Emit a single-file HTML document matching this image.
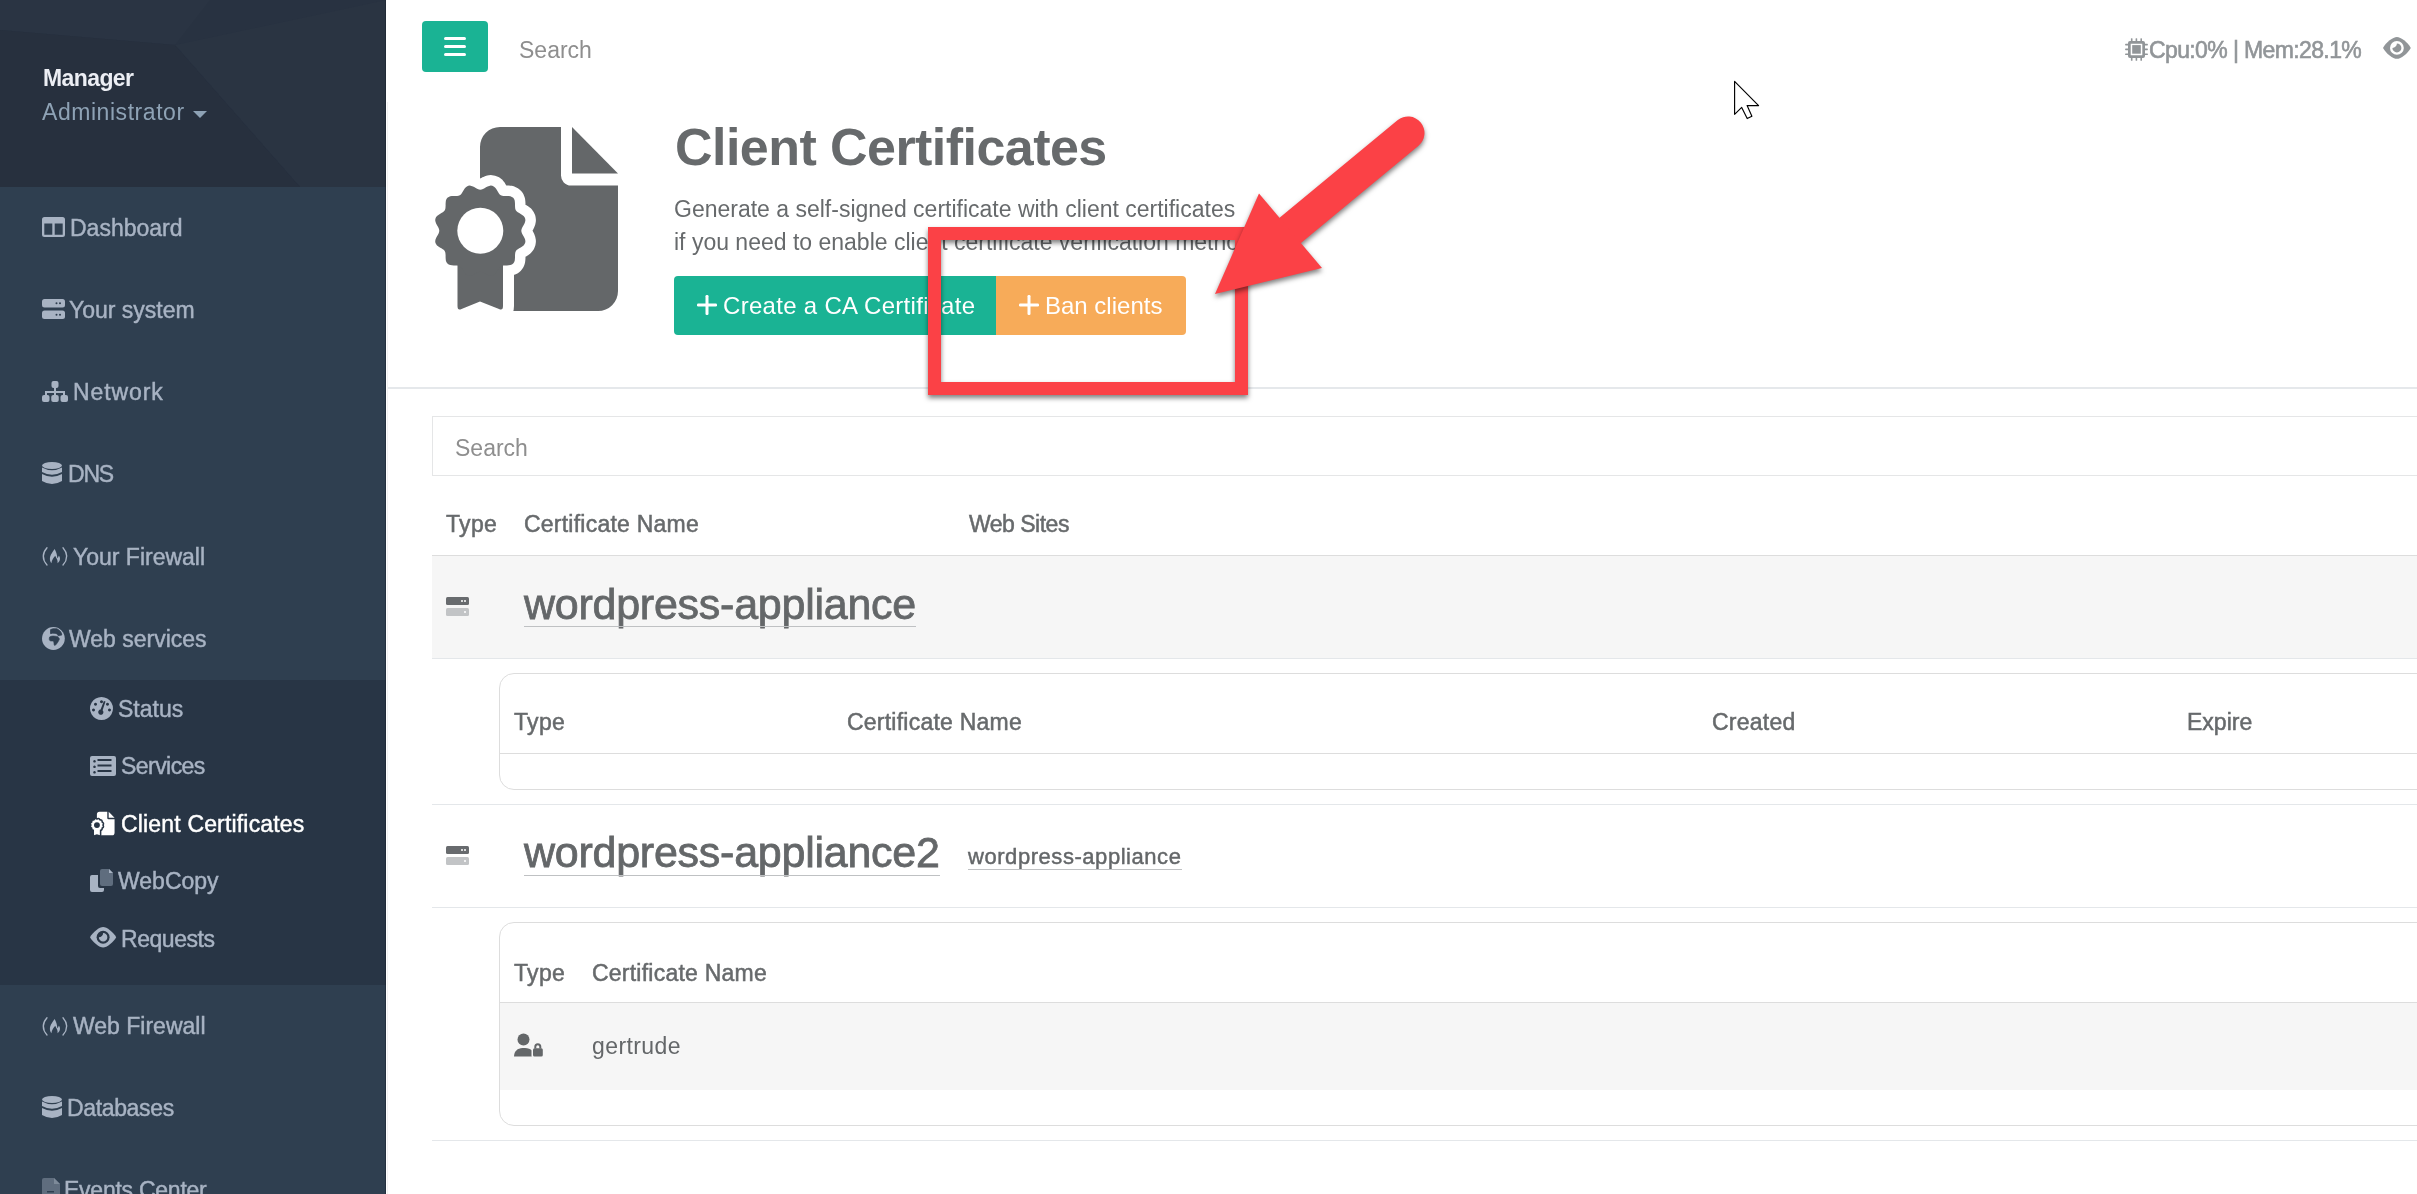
<!DOCTYPE html>
<html><head><meta charset="utf-8"><title>Client Certificates</title>
<style>
html,body{margin:0;padding:0;width:2417px;height:1194px;overflow:hidden;background:#fff;position:relative;font-family:"Liberation Sans", sans-serif}
.t{position:absolute;white-space:nowrap;font-family:"Liberation Sans", sans-serif;will-change:transform}
.ic{position:absolute;overflow:visible}
.hl{position:absolute}
#side{position:absolute;left:0;top:0;width:386px;height:1194px;background:#2f3f50}
#sidehead{position:absolute;left:0;top:0;width:386px;height:187px;background:#283241;overflow:hidden}
#submenu{position:absolute;left:0;top:680px;width:386px;height:305px;background:#283545}
#sideedge{position:absolute;left:385px;top:0;width:1px;height:1194px;background:rgba(20,28,38,0.4)}
#sideedge:after{content:"";position:absolute;left:2px;top:102px;width:1px;height:1092px;background:#f1f1f2}
#burger{position:absolute;left:422px;top:21px;width:66px;height:51px;background:#1ab394;border-radius:4px}
#burger i{position:absolute;left:22px;width:22px;height:3px;border-radius:2px;background:#fff}
#btn1{position:absolute;left:674px;top:276px;width:322px;height:58.5px;background:#1ab394;border-radius:4px 0 0 4px}
#btn2{position:absolute;left:996px;top:276px;width:190px;height:58.5px;background:#f7ab59;border-radius:0 4px 4px 0}
#search2{position:absolute;left:432px;top:416px;width:2100px;height:58px;border:1px solid #e5e6e7;background:#fff}
.nest{position:absolute;left:499px;width:2000px;border:1px solid #dddddd;border-radius:15px;box-sizing:border-box}
#redbox{position:absolute;left:928px;top:227px;width:320px;height:168px;box-sizing:border-box;border:13px solid #fb4146;
  filter:drop-shadow(0px 3px 2.5px rgba(0,0,0,0.5))}
</style></head><body>
<div id="side"></div><div id="sidehead"><svg width="386" height="187" style="position:absolute;left:0;top:0"><polygon points="0,0 210,0 175,45 0,30" fill="#2b3544" opacity="0.6"/><polygon points="175,45 386,0 386,187 300,187" fill="#2b3544" opacity="0.5"/><polygon points="0,30 175,45 300,187 0,187" fill="#252e3b" opacity="0.5"/></svg></div><div id="submenu"></div><div id="sideedge"></div><div class="t" style="left:43px;top:66.8px;font-size:23px;line-height:23px;color:#eceef4;font-weight:700;letter-spacing:-0.6px;">Manager</div>
<div class="t" style="left:42px;top:101.3px;font-size:23px;line-height:23px;color:#8ea2b5;font-weight:400;letter-spacing:0.55px;">Administrator</div>
<svg class="ic" style="left:193px;top:111px" width="14" height="7"><polygon points="0,0 14,0 7,7" fill="#8ea2b5"/></svg><svg class="ic" style="left:42px;top:217px" width="23" height="20" viewBox="0 0 23 20" fill="#a8b3c3"><path fill-rule="evenodd" d="M2.5,0 H20.5 A2.5,2.5 0 0 1 23,2.5 V17.5 A2.5,2.5 0 0 1 20.5,20 H2.5 A2.5,2.5 0 0 1 0,17.5 V2.5 A2.5,2.5 0 0 1 2.5,0Z M2.3,6.5 V17.7 H10.3 V6.5Z M12.7,6.5 V17.7 H20.7 V6.5Z"/></svg>
<div class="t" style="left:70px;top:217.3px;font-size:23px;line-height:23px;color:#a8b3c3;font-weight:400;letter-spacing:0px;-webkit-text-stroke:0.45px #a8b3c3;">Dashboard</div>
<svg class="ic" style="left:42px;top:299px" width="23" height="20" viewBox="0 0 23 20" fill="#a8b3c3"><rect x="0" y="0" width="23" height="8.5" rx="2.5"/><rect x="0" y="11.5" width="23" height="8.5" rx="2.5"/><circle cx="14.5" cy="4.25" r="1" fill="#2e3e4f"/><circle cx="18" cy="4.25" r="1" fill="#2e3e4f"/><circle cx="14.5" cy="15.75" r="1" fill="#2e3e4f"/><circle cx="18" cy="15.75" r="1" fill="#2e3e4f"/></svg>
<div class="t" style="left:69px;top:299.3px;font-size:23px;line-height:23px;color:#a8b3c3;font-weight:400;letter-spacing:0px;-webkit-text-stroke:0.45px #a8b3c3;">Your system</div>
<svg class="ic" style="left:42px;top:381px" width="26" height="21" viewBox="0 0 26 21" fill="#a8b3c3"><rect x="9.5" y="0" width="7" height="7" rx="2"/><rect x="12" y="6" width="2" height="5"/><rect x="3" y="10" width="20" height="2"/><rect x="3" y="10" width="2" height="5"/><rect x="21" y="10" width="2" height="5"/><rect x="12" y="10" width="2" height="5"/><rect x="0" y="14" width="7.5" height="7" rx="2"/><rect x="9.25" y="14" width="7.5" height="7" rx="2"/><rect x="18.5" y="14" width="7.5" height="7" rx="2"/></svg>
<div class="t" style="left:73px;top:381.3px;font-size:23px;line-height:23px;color:#a8b3c3;font-weight:400;letter-spacing:0.9px;-webkit-text-stroke:0.45px #a8b3c3;">Network</div>
<svg class="ic" style="left:42px;top:462px" width="20" height="23" viewBox="0 0 20 23" fill="#a8b3c3"><ellipse cx="10" cy="3.5" rx="10" ry="3.5"/><path d="M0,5.5 Q10,11 20,5.5 V10 Q10,15.5 0,10Z"/><path d="M0,12 Q10,17.5 20,12 V19 Q10,25 0,19Z"/></svg>
<div class="t" style="left:67.5px;top:463.3px;font-size:23px;line-height:23px;color:#a8b3c3;font-weight:400;letter-spacing:-1.2px;-webkit-text-stroke:0.45px #a8b3c3;">DNS</div>
<svg class="ic" style="left:38px;top:540px" width="34" height="32" viewBox="0 0 34 32" fill="#a8b3c3"><path d="M9.00,7.80 Q1.50,16.40 9.00,25.00" stroke="#a8b3c3" stroke-width="1.3" fill="none" stroke-linecap="round"/><path d="M25.00,7.80 Q32.50,16.40 25.00,25.00" stroke="#a8b3c3" stroke-width="1.3" fill="none" stroke-linecap="round"/><path d="M16.60,9.00 C15.00,11.50 12.00,15.00 11.90,18.50 C11.80,20.50 12.50,22.00 13.40,23.20 C13.80,20.00 15.50,17.50 17.30,15.80 C17.80,17.50 18.80,18.50 19.30,20.00 C19.60,21.20 19.60,22.30 19.50,23.30 C21.00,22.00 22.00,20.50 22.00,18.70 C22.00,17.50 21.50,16.50 20.80,15.80 C20.50,17.00 20.00,17.80 19.30,18.20 C19.30,15.00 18.00,11.50 16.60,9.00Z"/></svg>
<div class="t" style="left:73px;top:546.3px;font-size:23px;line-height:23px;color:#a8b3c3;font-weight:400;letter-spacing:0px;-webkit-text-stroke:0.45px #a8b3c3;">Your Firewall</div>
<svg class="ic" style="left:38px;top:622px" width="32" height="32" viewBox="0 0 32 32" fill="#a8b3c3"><circle cx="15.40" cy="16.50" r="11.4"/><path d="M12.60,7.60 L15.00,6.80 L19.00,6.80 L21.50,8.50 L22.50,9.50 L23.30,11.00 L23.80,13.00 L22.50,13.30 L21.30,13.60 L20.30,13.80 L19.50,12.40 L18.00,11.40 L16.00,11.20 L14.50,11.20 L13.00,11.60 L12.50,11.60Z" fill="#2f3f50" stroke="#2f3f50" stroke-width="0.8" stroke-linejoin="round"/><path d="M11.60,15.00 L13.00,14.30 L15.00,14.00 L17.50,14.20 L18.50,14.40 L19.50,14.50 L20.20,15.30 L21.20,16.30 L21.30,17.50 L20.60,18.80 L19.80,20.20 L18.50,22.00 L17.00,23.60 L16.20,23.00 L16.00,21.50 L15.80,20.00 L15.50,19.20 L14.50,19.00 L13.50,19.00 L12.00,18.80 L11.30,17.50 L11.30,16.20Z" fill="#2f3f50" stroke="#2f3f50" stroke-width="0.6" stroke-linejoin="round"/></svg>
<div class="t" style="left:69px;top:628.3px;font-size:23px;line-height:23px;color:#a8b3c3;font-weight:400;letter-spacing:0px;-webkit-text-stroke:0.45px #a8b3c3;">Web services</div>
<svg class="ic" style="left:90px;top:697px" width="23" height="23" viewBox="0 0 23 23" fill="#a8b3c3"><path fill-rule="evenodd" d="M11.5,0 A11.5,11.5 0 1 1 11.49,0Z M11.5,3.2 A1.5,1.5 0 1 0 11.51,3.2Z M5.5,5.8 A1.5,1.5 0 1 0 5.51,5.8Z M3.5,11.5 A1.5,1.5 0 1 0 3.51,11.5Z M19.5,11.5 A1.5,1.5 0 1 0 19.51,11.5Z M17.5,5.8 A1.5,1.5 0 1 0 17.51,5.8Z M15.5,4.5 L12.6,13.3 A2.6,2.6 0 1 1 10.6,12.6 L13.9,4 Z"/></svg>
<div class="t" style="left:118px;top:698.3px;font-size:23px;line-height:23px;color:#a8b3c3;font-weight:400;letter-spacing:0px;-webkit-text-stroke:0.45px #a8b3c3;">Status</div>
<svg class="ic" style="left:90px;top:756px" width="26" height="20" viewBox="0 0 26 20" fill="#a8b3c3"><path fill-rule="evenodd" d="M2,0 H24 A2,2 0 0 1 26,2 V18 A2,2 0 0 1 24,20 H2 A2,2 0 0 1 0,18 V2 A2,2 0 0 1 2,0Z M4.5,4 A1.3,1.3 0 1 0 4.51,4Z M4.5,9.5 A1.3,1.3 0 1 0 4.51,9.5Z M4.5,15 A1.3,1.3 0 1 0 4.51,15Z M7.5,3 V5 H21.5 V3Z M7.5,8.5 V10.5 H21.5 V8.5Z M7.5,14 V16 H21.5 V14Z"/></svg>
<div class="t" style="left:120.5px;top:755.3px;font-size:23px;line-height:23px;color:#a8b3c3;font-weight:400;letter-spacing:-0.55px;-webkit-text-stroke:0.45px #a8b3c3;">Services</div>
<div class="t" style="left:120.5px;top:812.8px;font-size:23px;line-height:23px;color:#ffffff;font-weight:400;letter-spacing:0.17px;-webkit-text-stroke:0.45px #ffffff;">Client Certificates</div>
<svg class="ic" style="left:90px;top:869px" width="23" height="23" viewBox="0 0 23 23" fill="#a8b3c3"><path d="M2,6 H8 V17 A2,2 0 0 0 10,19 H14 V21 A2,2 0 0 1 12,23 H2 A2,2 0 0 1 0,21 V8 A2,2 0 0 1 2,6Z"/><path d="M12,0 H19 L23,4 V15 A2,2 0 0 1 21,17 H12 A2,2 0 0 1 10,15 V2 A2,2 0 0 1 12,0Z" fill="#5f6d7e"/><path d="M19,0 L23,4 H19Z" fill="#a8b3c3"/></svg>
<div class="t" style="left:118px;top:870.3px;font-size:23px;line-height:23px;color:#a8b3c3;font-weight:400;letter-spacing:0px;-webkit-text-stroke:0.45px #a8b3c3;">WebCopy</div>
<svg class="ic" style="left:89.8px;top:927.2px" width="27" height="21" viewBox="0 0 27 21" fill="#a8b3c3"><path d="M0,10.25 C2.88,4.92 9.43,0 13.1,0 C16.77,0 23.32,4.92 26.2,10.25 C23.32,15.58 16.77,20.5 13.1,20.5 C9.43,20.5 2.88,15.58 0,10.25Z" fill="#a8b3c3"/><circle cx="13.1" cy="10.25" r="6.50" fill="#283545"/><path d="M13.1,6.01 A4.24,4.24 0 1 1 8.86,10.25 A4.24,4.24 0 0 0 13.1,6.01Z" fill="#a8b3c3"/></svg>
<div class="t" style="left:120.5px;top:928.3px;font-size:23px;line-height:23px;color:#a8b3c3;font-weight:400;letter-spacing:-0.45px;-webkit-text-stroke:0.45px #a8b3c3;">Requests</div>
<svg class="ic" style="left:38px;top:1009.5px" width="34" height="32" viewBox="0 0 34 32" fill="#a8b3c3"><path d="M9.00,7.80 Q1.50,16.40 9.00,25.00" stroke="#a8b3c3" stroke-width="1.3" fill="none" stroke-linecap="round"/><path d="M25.00,7.80 Q32.50,16.40 25.00,25.00" stroke="#a8b3c3" stroke-width="1.3" fill="none" stroke-linecap="round"/><path d="M16.60,9.00 C15.00,11.50 12.00,15.00 11.90,18.50 C11.80,20.50 12.50,22.00 13.40,23.20 C13.80,20.00 15.50,17.50 17.30,15.80 C17.80,17.50 18.80,18.50 19.30,20.00 C19.60,21.20 19.60,22.30 19.50,23.30 C21.00,22.00 22.00,20.50 22.00,18.70 C22.00,17.50 21.50,16.50 20.80,15.80 C20.50,17.00 20.00,17.80 19.30,18.20 C19.30,15.00 18.00,11.50 16.60,9.00Z"/></svg>
<div class="t" style="left:73px;top:1015.3px;font-size:23px;line-height:23px;color:#a8b3c3;font-weight:400;letter-spacing:0px;-webkit-text-stroke:0.45px #a8b3c3;">Web Firewall</div>
<svg class="ic" style="left:42px;top:1096px" width="20" height="23" viewBox="0 0 20 23" fill="#a8b3c3"><ellipse cx="10" cy="3.5" rx="10" ry="3.5"/><path d="M0,5.5 Q10,11 20,5.5 V10 Q10,15.5 0,10Z"/><path d="M0,12 Q10,17.5 20,12 V19 Q10,25 0,19Z"/></svg>
<div class="t" style="left:66.5px;top:1097.3px;font-size:23px;line-height:23px;color:#a8b3c3;font-weight:400;letter-spacing:-0.35px;-webkit-text-stroke:0.45px #a8b3c3;">Databases</div>
<svg class="ic" style="left:42px;top:1178px" width="18" height="25" viewBox="0 0 18 25" fill="#5f6d7e"><path d="M2,0 H12 L18,6 V25 H0 V2 A2,2 0 0 1 2,0Z"/><path d="M12,0 L18,6 H12Z" fill="#7d8a99"/><rect x="5" y="13" width="7" height="1.5" fill="#2e3e4f"/></svg>
<div class="t" style="left:64px;top:1179.3px;font-size:23px;line-height:23px;color:#a8b3c3;font-weight:400;letter-spacing:-0.25px;-webkit-text-stroke:0.45px #a8b3c3;">Events Center</div>
<div id="burger"><i style="top:16px"></i><i style="top:24px"></i><i style="top:31.5px"></i></div><div class="t" style="left:519px;top:39.3px;font-size:23px;line-height:23px;color:#8e8e8e;font-weight:400;letter-spacing:0px;">Search</div>
<svg class="ic" style="left:2120px;top:32px" width="32" height="32" viewBox="0 0 32 32" fill="#919598"><path fill-rule="evenodd" d="M10,9 H23 A2,2 0 0 1 25,11 V24 A2,2 0 0 1 23,26 H10 A2,2 0 0 1 8,24 V11 A2,2 0 0 1 10,9Z M10.7,11.7 V23.3 H22.3 V11.7Z"/><rect x="12.2" y="13.1" width="8.6" height="8.6"/><rect x="10.9" y="6.2" width="1.6" height="3.5" rx="0.6"/><rect x="10.9" y="25.3" width="1.6" height="3.5" rx="0.6"/><rect x="15.6" y="6.2" width="1.6" height="3.5" rx="0.6"/><rect x="15.6" y="25.3" width="1.6" height="3.5" rx="0.6"/><rect x="20.4" y="6.2" width="1.6" height="3.5" rx="0.6"/><rect x="20.4" y="25.3" width="1.6" height="3.5" rx="0.6"/><rect x="5.1" y="11.8" width="3.5" height="1.6" rx="0.6"/><rect x="24.4" y="11.8" width="3.5" height="1.6" rx="0.6"/><rect x="5.1" y="16.6" width="3.5" height="1.6" rx="0.6"/><rect x="24.4" y="16.6" width="3.5" height="1.6" rx="0.6"/><rect x="5.1" y="21.5" width="3.5" height="1.6" rx="0.6"/><rect x="24.4" y="21.5" width="3.5" height="1.6" rx="0.6"/></svg>
<div class="t" style="left:2149px;top:39.3px;font-size:23px;line-height:23px;color:#919598;font-weight:400;letter-spacing:-0.62px;-webkit-text-stroke:0.6px #919598;">Cpu:0% | Mem:28.1%</div>
<svg class="ic" style="left:2383px;top:37.2px" width="28" height="22" viewBox="0 0 28 22" fill="#a8b3c3"><path d="M0,10.9 C3.06,5.23 10.01,0 13.9,0 C17.79,0 24.74,5.23 27.8,10.9 C24.74,16.57 17.79,21.8 13.9,21.8 C10.01,21.8 3.06,16.57 0,10.9Z" fill="#919598"/><circle cx="13.9" cy="10.9" r="6.89" fill="#ffffff"/><path d="M13.9,6.40 A4.50,4.50 0 1 1 9.40,10.9 A4.50,4.50 0 0 0 13.9,6.40Z" fill="#919598"/></svg>
<svg class="ic" style="left:430px;top:120px;color:#646769;--bg:#fff" width="200" height="200"><path d="M70.0,7.0 H131 V55 A10,10 0 0 0 141.0,65.5 H188 V171 A20,20 0 0 1 168.0,191.0 H50 V27 A20,20 0 0 1 70.0,7.0Z" fill="currentColor"/><path d="M142.0,7.0 L188.0,53.5 H142Z" fill="currentColor"/><path d="M91.3,110.7 L91.5,112.0 L92.0,113.4 L92.8,114.9 L93.7,116.4 L94.5,118.0 L95.1,119.6 L95.4,121.2 L95.2,122.7 L94.6,124.1 L93.6,125.4 L92.2,126.5 L90.7,127.4 L89.2,128.3 L87.8,129.2 L86.6,130.1 L85.8,131.2 L85.3,132.5 L85.1,133.9 L85.0,135.6 L85.0,137.3 L84.9,139.1 L84.7,140.8 L84.1,142.3 L83.2,143.6 L81.9,144.5 L80.4,145.1 L78.7,145.3 L76.9,145.4 L75.2,145.4 L73.5,145.5 L72.1,145.7 L70.8,146.2 L69.7,147.0 L68.8,148.2 L67.9,149.6 L67.0,151.1 L66.1,152.6 L65.0,154.0 L63.7,155.0 L62.3,155.6 L60.8,155.8 L59.2,155.5 L57.6,154.9 L56.0,154.1 L54.5,153.2 L53.0,152.4 L51.6,151.9 L50.3,151.7 L49.0,151.9 L47.6,152.4 L46.1,153.2 L44.6,154.1 L43.0,154.9 L41.4,155.5 L39.8,155.8 L38.3,155.6 L36.9,155.0 L35.6,154.0 L34.5,152.6 L33.6,151.1 L32.7,149.6 L31.8,148.2 L30.9,147.0 L29.8,146.2 L28.5,145.7 L27.1,145.5 L25.4,145.4 L23.7,145.4 L21.9,145.3 L20.2,145.1 L18.7,144.5 L17.4,143.6 L16.5,142.3 L15.9,140.8 L15.7,139.1 L15.6,137.3 L15.6,135.6 L15.5,133.9 L15.3,132.5 L14.8,131.2 L14.0,130.1 L12.8,129.2 L11.4,128.3 L9.9,127.4 L8.4,126.5 L7.0,125.4 L6.0,124.1 L5.4,122.7 L5.2,121.2 L5.5,119.6 L6.1,118.0 L6.9,116.4 L7.8,114.9 L8.6,113.4 L9.1,112.0 L9.3,110.7 L9.1,109.4 L8.6,108.0 L7.8,106.5 L6.9,105.0 L6.1,103.4 L5.5,101.8 L5.2,100.2 L5.4,98.7 L6.0,97.3 L7.0,96.0 L8.4,94.9 L9.9,94.0 L11.4,93.1 L12.8,92.2 L14.0,91.3 L14.8,90.2 L15.3,88.9 L15.5,87.5 L15.6,85.8 L15.6,84.1 L15.7,82.3 L15.9,80.6 L16.5,79.1 L17.4,77.8 L18.7,76.9 L20.2,76.3 L21.9,76.1 L23.7,76.0 L25.4,76.0 L27.1,75.9 L28.5,75.7 L29.8,75.2 L30.9,74.4 L31.8,73.2 L32.7,71.8 L33.6,70.3 L34.5,68.8 L35.6,67.4 L36.9,66.4 L38.3,65.8 L39.8,65.6 L41.4,65.9 L43.0,66.5 L44.6,67.3 L46.1,68.2 L47.6,69.0 L49.0,69.5 L50.3,69.7 L51.6,69.5 L53.0,69.0 L54.5,68.2 L56.0,67.3 L57.6,66.5 L59.2,65.9 L60.8,65.6 L62.3,65.8 L63.7,66.4 L65.0,67.4 L66.1,68.8 L67.0,70.3 L67.9,71.8 L68.8,73.2 L69.7,74.4 L70.8,75.2 L72.1,75.7 L73.5,75.9 L75.2,76.0 L76.9,76.0 L78.7,76.1 L80.4,76.3 L81.9,76.9 L83.2,77.8 L84.1,79.1 L84.7,80.6 L84.9,82.3 L85.0,84.1 L85.0,85.8 L85.1,87.5 L85.3,88.9 L85.8,90.2 L86.6,91.3 L87.8,92.2 L89.2,93.1 L90.7,94.0 L92.2,94.9 L93.6,96.0 L94.6,97.3 L95.2,98.7 L95.4,100.2 L95.1,101.8 L94.5,103.4 L93.7,105.0 L92.8,106.5 L92.0,108.0 L91.5,109.4Z" fill="var(--bg)" stroke="var(--bg)" stroke-width="21" stroke-linejoin="round"/><path d="M27.5,142.0 H73 V186 Q73.0,191.0 69.0,189.0 L50.0,181.5 L31.5,189.0 Q27.5,191.0 27.5,186.0Z" fill="var(--bg)" stroke="var(--bg)" stroke-width="22" stroke-linejoin="round"/><path d="M27.5,142.0 H73 V186 Q73.0,191.0 69.0,189.0 L50.0,181.5 L31.5,189.0 Q27.5,191.0 27.5,186.0Z" fill="currentColor"/><path d="M91.3,110.7 L91.5,112.0 L92.0,113.4 L92.8,114.9 L93.7,116.4 L94.5,118.0 L95.1,119.6 L95.4,121.2 L95.2,122.7 L94.6,124.1 L93.6,125.4 L92.2,126.5 L90.7,127.4 L89.2,128.3 L87.8,129.2 L86.6,130.1 L85.8,131.2 L85.3,132.5 L85.1,133.9 L85.0,135.6 L85.0,137.3 L84.9,139.1 L84.7,140.8 L84.1,142.3 L83.2,143.6 L81.9,144.5 L80.4,145.1 L78.7,145.3 L76.9,145.4 L75.2,145.4 L73.5,145.5 L72.1,145.7 L70.8,146.2 L69.7,147.0 L68.8,148.2 L67.9,149.6 L67.0,151.1 L66.1,152.6 L65.0,154.0 L63.7,155.0 L62.3,155.6 L60.8,155.8 L59.2,155.5 L57.6,154.9 L56.0,154.1 L54.5,153.2 L53.0,152.4 L51.6,151.9 L50.3,151.7 L49.0,151.9 L47.6,152.4 L46.1,153.2 L44.6,154.1 L43.0,154.9 L41.4,155.5 L39.8,155.8 L38.3,155.6 L36.9,155.0 L35.6,154.0 L34.5,152.6 L33.6,151.1 L32.7,149.6 L31.8,148.2 L30.9,147.0 L29.8,146.2 L28.5,145.7 L27.1,145.5 L25.4,145.4 L23.7,145.4 L21.9,145.3 L20.2,145.1 L18.7,144.5 L17.4,143.6 L16.5,142.3 L15.9,140.8 L15.7,139.1 L15.6,137.3 L15.6,135.6 L15.5,133.9 L15.3,132.5 L14.8,131.2 L14.0,130.1 L12.8,129.2 L11.4,128.3 L9.9,127.4 L8.4,126.5 L7.0,125.4 L6.0,124.1 L5.4,122.7 L5.2,121.2 L5.5,119.6 L6.1,118.0 L6.9,116.4 L7.8,114.9 L8.6,113.4 L9.1,112.0 L9.3,110.7 L9.1,109.4 L8.6,108.0 L7.8,106.5 L6.9,105.0 L6.1,103.4 L5.5,101.8 L5.2,100.2 L5.4,98.7 L6.0,97.3 L7.0,96.0 L8.4,94.9 L9.9,94.0 L11.4,93.1 L12.8,92.2 L14.0,91.3 L14.8,90.2 L15.3,88.9 L15.5,87.5 L15.6,85.8 L15.6,84.1 L15.7,82.3 L15.9,80.6 L16.5,79.1 L17.4,77.8 L18.7,76.9 L20.2,76.3 L21.9,76.1 L23.7,76.0 L25.4,76.0 L27.1,75.9 L28.5,75.7 L29.8,75.2 L30.9,74.4 L31.8,73.2 L32.7,71.8 L33.6,70.3 L34.5,68.8 L35.6,67.4 L36.9,66.4 L38.3,65.8 L39.8,65.6 L41.4,65.9 L43.0,66.5 L44.6,67.3 L46.1,68.2 L47.6,69.0 L49.0,69.5 L50.3,69.7 L51.6,69.5 L53.0,69.0 L54.5,68.2 L56.0,67.3 L57.6,66.5 L59.2,65.9 L60.8,65.6 L62.3,65.8 L63.7,66.4 L65.0,67.4 L66.1,68.8 L67.0,70.3 L67.9,71.8 L68.8,73.2 L69.7,74.4 L70.8,75.2 L72.1,75.7 L73.5,75.9 L75.2,76.0 L76.9,76.0 L78.7,76.1 L80.4,76.3 L81.9,76.9 L83.2,77.8 L84.1,79.1 L84.7,80.6 L84.9,82.3 L85.0,84.1 L85.0,85.8 L85.1,87.5 L85.3,88.9 L85.8,90.2 L86.6,91.3 L87.8,92.2 L89.2,93.1 L90.7,94.0 L92.2,94.9 L93.6,96.0 L94.6,97.3 L95.2,98.7 L95.4,100.2 L95.1,101.8 L94.5,103.4 L93.7,105.0 L92.8,106.5 L92.0,108.0 L91.5,109.4Z" fill="currentColor"/><circle cx="50.30000000000001" cy="110.69999999999999" r="23" fill="var(--bg)"/></svg><svg class="ic" style="left:0px;top:0px;color:#ffffff;--bg:#283545" width="200" height="900"><g transform="translate(90.50,810.90) scale(0.128)"><path d="M70.0,7.0 H131 V55 A10,10 0 0 0 141.0,65.5 H188 V171 A20,20 0 0 1 168.0,191.0 H50 V27 A20,20 0 0 1 70.0,7.0Z" fill="currentColor"/><path d="M142.0,7.0 L188.0,53.5 H142Z" fill="currentColor"/><path d="M91.3,110.7 L91.5,112.0 L92.0,113.4 L92.8,114.9 L93.7,116.4 L94.5,118.0 L95.1,119.6 L95.4,121.2 L95.2,122.7 L94.6,124.1 L93.6,125.4 L92.2,126.5 L90.7,127.4 L89.2,128.3 L87.8,129.2 L86.6,130.1 L85.8,131.2 L85.3,132.5 L85.1,133.9 L85.0,135.6 L85.0,137.3 L84.9,139.1 L84.7,140.8 L84.1,142.3 L83.2,143.6 L81.9,144.5 L80.4,145.1 L78.7,145.3 L76.9,145.4 L75.2,145.4 L73.5,145.5 L72.1,145.7 L70.8,146.2 L69.7,147.0 L68.8,148.2 L67.9,149.6 L67.0,151.1 L66.1,152.6 L65.0,154.0 L63.7,155.0 L62.3,155.6 L60.8,155.8 L59.2,155.5 L57.6,154.9 L56.0,154.1 L54.5,153.2 L53.0,152.4 L51.6,151.9 L50.3,151.7 L49.0,151.9 L47.6,152.4 L46.1,153.2 L44.6,154.1 L43.0,154.9 L41.4,155.5 L39.8,155.8 L38.3,155.6 L36.9,155.0 L35.6,154.0 L34.5,152.6 L33.6,151.1 L32.7,149.6 L31.8,148.2 L30.9,147.0 L29.8,146.2 L28.5,145.7 L27.1,145.5 L25.4,145.4 L23.7,145.4 L21.9,145.3 L20.2,145.1 L18.7,144.5 L17.4,143.6 L16.5,142.3 L15.9,140.8 L15.7,139.1 L15.6,137.3 L15.6,135.6 L15.5,133.9 L15.3,132.5 L14.8,131.2 L14.0,130.1 L12.8,129.2 L11.4,128.3 L9.9,127.4 L8.4,126.5 L7.0,125.4 L6.0,124.1 L5.4,122.7 L5.2,121.2 L5.5,119.6 L6.1,118.0 L6.9,116.4 L7.8,114.9 L8.6,113.4 L9.1,112.0 L9.3,110.7 L9.1,109.4 L8.6,108.0 L7.8,106.5 L6.9,105.0 L6.1,103.4 L5.5,101.8 L5.2,100.2 L5.4,98.7 L6.0,97.3 L7.0,96.0 L8.4,94.9 L9.9,94.0 L11.4,93.1 L12.8,92.2 L14.0,91.3 L14.8,90.2 L15.3,88.9 L15.5,87.5 L15.6,85.8 L15.6,84.1 L15.7,82.3 L15.9,80.6 L16.5,79.1 L17.4,77.8 L18.7,76.9 L20.2,76.3 L21.9,76.1 L23.7,76.0 L25.4,76.0 L27.1,75.9 L28.5,75.7 L29.8,75.2 L30.9,74.4 L31.8,73.2 L32.7,71.8 L33.6,70.3 L34.5,68.8 L35.6,67.4 L36.9,66.4 L38.3,65.8 L39.8,65.6 L41.4,65.9 L43.0,66.5 L44.6,67.3 L46.1,68.2 L47.6,69.0 L49.0,69.5 L50.3,69.7 L51.6,69.5 L53.0,69.0 L54.5,68.2 L56.0,67.3 L57.6,66.5 L59.2,65.9 L60.8,65.6 L62.3,65.8 L63.7,66.4 L65.0,67.4 L66.1,68.8 L67.0,70.3 L67.9,71.8 L68.8,73.2 L69.7,74.4 L70.8,75.2 L72.1,75.7 L73.5,75.9 L75.2,76.0 L76.9,76.0 L78.7,76.1 L80.4,76.3 L81.9,76.9 L83.2,77.8 L84.1,79.1 L84.7,80.6 L84.9,82.3 L85.0,84.1 L85.0,85.8 L85.1,87.5 L85.3,88.9 L85.8,90.2 L86.6,91.3 L87.8,92.2 L89.2,93.1 L90.7,94.0 L92.2,94.9 L93.6,96.0 L94.6,97.3 L95.2,98.7 L95.4,100.2 L95.1,101.8 L94.5,103.4 L93.7,105.0 L92.8,106.5 L92.0,108.0 L91.5,109.4Z" fill="var(--bg)" stroke="var(--bg)" stroke-width="24" stroke-linejoin="round"/><path d="M27.5,142.0 H73 V186 Q73.0,191.0 69.0,189.0 L50.0,181.5 L31.5,189.0 Q27.5,191.0 27.5,186.0Z" fill="var(--bg)" stroke="var(--bg)" stroke-width="24" stroke-linejoin="round"/><path d="M27.5,142.0 H73 V186 Q73.0,191.0 69.0,189.0 L50.0,181.5 L31.5,189.0 Q27.5,191.0 27.5,186.0Z" fill="currentColor"/><path d="M91.3,110.7 L91.5,112.0 L92.0,113.4 L92.8,114.9 L93.7,116.4 L94.5,118.0 L95.1,119.6 L95.4,121.2 L95.2,122.7 L94.6,124.1 L93.6,125.4 L92.2,126.5 L90.7,127.4 L89.2,128.3 L87.8,129.2 L86.6,130.1 L85.8,131.2 L85.3,132.5 L85.1,133.9 L85.0,135.6 L85.0,137.3 L84.9,139.1 L84.7,140.8 L84.1,142.3 L83.2,143.6 L81.9,144.5 L80.4,145.1 L78.7,145.3 L76.9,145.4 L75.2,145.4 L73.5,145.5 L72.1,145.7 L70.8,146.2 L69.7,147.0 L68.8,148.2 L67.9,149.6 L67.0,151.1 L66.1,152.6 L65.0,154.0 L63.7,155.0 L62.3,155.6 L60.8,155.8 L59.2,155.5 L57.6,154.9 L56.0,154.1 L54.5,153.2 L53.0,152.4 L51.6,151.9 L50.3,151.7 L49.0,151.9 L47.6,152.4 L46.1,153.2 L44.6,154.1 L43.0,154.9 L41.4,155.5 L39.8,155.8 L38.3,155.6 L36.9,155.0 L35.6,154.0 L34.5,152.6 L33.6,151.1 L32.7,149.6 L31.8,148.2 L30.9,147.0 L29.8,146.2 L28.5,145.7 L27.1,145.5 L25.4,145.4 L23.7,145.4 L21.9,145.3 L20.2,145.1 L18.7,144.5 L17.4,143.6 L16.5,142.3 L15.9,140.8 L15.7,139.1 L15.6,137.3 L15.6,135.6 L15.5,133.9 L15.3,132.5 L14.8,131.2 L14.0,130.1 L12.8,129.2 L11.4,128.3 L9.9,127.4 L8.4,126.5 L7.0,125.4 L6.0,124.1 L5.4,122.7 L5.2,121.2 L5.5,119.6 L6.1,118.0 L6.9,116.4 L7.8,114.9 L8.6,113.4 L9.1,112.0 L9.3,110.7 L9.1,109.4 L8.6,108.0 L7.8,106.5 L6.9,105.0 L6.1,103.4 L5.5,101.8 L5.2,100.2 L5.4,98.7 L6.0,97.3 L7.0,96.0 L8.4,94.9 L9.9,94.0 L11.4,93.1 L12.8,92.2 L14.0,91.3 L14.8,90.2 L15.3,88.9 L15.5,87.5 L15.6,85.8 L15.6,84.1 L15.7,82.3 L15.9,80.6 L16.5,79.1 L17.4,77.8 L18.7,76.9 L20.2,76.3 L21.9,76.1 L23.7,76.0 L25.4,76.0 L27.1,75.9 L28.5,75.7 L29.8,75.2 L30.9,74.4 L31.8,73.2 L32.7,71.8 L33.6,70.3 L34.5,68.8 L35.6,67.4 L36.9,66.4 L38.3,65.8 L39.8,65.6 L41.4,65.9 L43.0,66.5 L44.6,67.3 L46.1,68.2 L47.6,69.0 L49.0,69.5 L50.3,69.7 L51.6,69.5 L53.0,69.0 L54.5,68.2 L56.0,67.3 L57.6,66.5 L59.2,65.9 L60.8,65.6 L62.3,65.8 L63.7,66.4 L65.0,67.4 L66.1,68.8 L67.0,70.3 L67.9,71.8 L68.8,73.2 L69.7,74.4 L70.8,75.2 L72.1,75.7 L73.5,75.9 L75.2,76.0 L76.9,76.0 L78.7,76.1 L80.4,76.3 L81.9,76.9 L83.2,77.8 L84.1,79.1 L84.7,80.6 L84.9,82.3 L85.0,84.1 L85.0,85.8 L85.1,87.5 L85.3,88.9 L85.8,90.2 L86.6,91.3 L87.8,92.2 L89.2,93.1 L90.7,94.0 L92.2,94.9 L93.6,96.0 L94.6,97.3 L95.2,98.7 L95.4,100.2 L95.1,101.8 L94.5,103.4 L93.7,105.0 L92.8,106.5 L92.0,108.0 L91.5,109.4Z" fill="currentColor"/><circle cx="50.30000000000001" cy="110.69999999999999" r="23" fill="var(--bg)"/></g></svg><div class="t" style="left:674.5px;top:121.1px;font-size:52px;line-height:52px;color:#676a6c;font-weight:700;letter-spacing:-0.55px;">Client Certificates</div>
<div class="t" style="left:674px;top:198.3px;font-size:23px;line-height:23px;color:#676a6c;font-weight:400;letter-spacing:0px;">Generate a self-signed certificate with client certificates</div>
<div class="t" style="left:674px;top:231.3px;font-size:23px;line-height:23px;color:#676a6c;font-weight:400;letter-spacing:0px;">if you need to enable client certificate verification method</div>
<div id="btn1"></div><div id="btn2"></div><svg class="ic" style="left:697px;top:294.8px" width="20" height="20" viewBox="0 0 20 20" fill="#fff"><rect x="0" y="8.5" width="20" height="3" rx="1.2"/><rect x="8.5" y="0" width="3" height="20" rx="1.2"/></svg>
<div class="t" style="left:723px;top:294.0px;font-size:24px;line-height:24px;color:#fff;font-weight:400;letter-spacing:0.3px;">Create a CA Certificate</div>
<svg class="ic" style="left:1019px;top:294.8px" width="20" height="20" viewBox="0 0 20 20" fill="#fff"><rect x="0" y="8.5" width="20" height="3" rx="1.2"/><rect x="8.5" y="0" width="3" height="20" rx="1.2"/></svg>
<div class="t" style="left:1045px;top:293.5px;font-size:24px;line-height:24px;color:#fff;font-weight:400;letter-spacing:0px;">Ban clients</div>
<div class="hl" style="left:388px;top:387px;width:2029px;height:2px;background:#e5e8eb"></div><div id="search2"></div><div class="t" style="left:455px;top:437.3px;font-size:23px;line-height:23px;color:#8e8e8e;font-weight:400;letter-spacing:0px;">Search</div>
<div class="t" style="left:446px;top:513.3px;font-size:23px;line-height:23px;color:#676a6c;font-weight:400;letter-spacing:0.3px;-webkit-text-stroke:0.5px #676a6c;">Type</div>
<div class="t" style="left:524px;top:513.3px;font-size:23px;line-height:23px;color:#676a6c;font-weight:400;letter-spacing:0.23px;-webkit-text-stroke:0.5px #676a6c;">Certificate Name</div>
<div class="t" style="left:968.5px;top:513.3px;font-size:23px;line-height:23px;color:#676a6c;font-weight:400;letter-spacing:-0.5px;-webkit-text-stroke:0.5px #676a6c;">Web Sites</div>
<div class="hl" style="left:432px;top:555px;width:1985px;height:1px;background:#dddddd"></div><div class="hl" style="left:432px;top:556px;width:1985px;height:102px;background:#f6f6f6"></div><div class="hl" style="left:432px;top:658px;width:1985px;height:1px;background:#e4e7ea"></div><svg class="ic" style="left:446px;top:597px" width="23" height="19" viewBox="0 0 23 19" fill="#a8b3c3"><rect x="0" y="0" width="23" height="8" rx="1.5" fill="#686b6e"/><rect x="0" y="11" width="23" height="8" rx="1.5" fill="#c2c4c6"/><circle cx="16" cy="4" r="1" fill="#fff"/><circle cx="19" cy="4" r="1" fill="#fff"/><circle cx="19" cy="15" r="1" fill="#fff"/></svg>
<div class="t" style="left:524px;top:582.6px;font-size:43px;line-height:43px;color:#646769;font-weight:400;letter-spacing:-0.25px;-webkit-text-stroke:0.8px #646769;">wordpress-appliance</div>
<div class="hl" style="left:524px;top:626px;width:392px;height:1px;background:#bfc1c3"></div><div class="nest" style="top:673px;height:117px"></div><div class="hl" style="left:500px;top:753px;width:1917px;height:1px;background:#dddddd"></div><div class="t" style="left:514px;top:711.3px;font-size:23px;line-height:23px;color:#676a6c;font-weight:400;letter-spacing:0.3px;-webkit-text-stroke:0.5px #676a6c;">Type</div>
<div class="t" style="left:847px;top:711.3px;font-size:23px;line-height:23px;color:#676a6c;font-weight:400;letter-spacing:0.23px;-webkit-text-stroke:0.5px #676a6c;">Certificate Name</div>
<div class="t" style="left:1712px;top:711.3px;font-size:23px;line-height:23px;color:#676a6c;font-weight:400;letter-spacing:0.25px;-webkit-text-stroke:0.5px #676a6c;">Created</div>
<div class="t" style="left:2187px;top:711.3px;font-size:23px;line-height:23px;color:#676a6c;font-weight:400;letter-spacing:0px;-webkit-text-stroke:0.5px #676a6c;">Expire</div>
<div class="hl" style="left:432px;top:804px;width:1985px;height:1px;background:#e4e7ea"></div><svg class="ic" style="left:446px;top:846px" width="23" height="19" viewBox="0 0 23 19" fill="#a8b3c3"><rect x="0" y="0" width="23" height="8" rx="1.5" fill="#686b6e"/><rect x="0" y="11" width="23" height="8" rx="1.5" fill="#c2c4c6"/><circle cx="16" cy="4" r="1" fill="#fff"/><circle cx="19" cy="4" r="1" fill="#fff"/><circle cx="19" cy="15" r="1" fill="#fff"/></svg>
<div class="t" style="left:524px;top:830.6px;font-size:43px;line-height:43px;color:#646769;font-weight:400;letter-spacing:-0.25px;-webkit-text-stroke:0.8px #646769;">wordpress-appliance2</div>
<div class="hl" style="left:524px;top:875px;width:416px;height:1px;background:#bfc1c3"></div><div class="t" style="left:968px;top:846.1px;font-size:22px;line-height:22px;color:#646769;font-weight:400;letter-spacing:0.55px;-webkit-text-stroke:0.45px #646769;">wordpress-appliance</div>
<div class="hl" style="left:968px;top:869px;width:214px;height:1px;background:#bfc1c3"></div><div class="hl" style="left:432px;top:907px;width:1985px;height:1px;background:#e4e7ea"></div><div class="nest" style="top:922px;height:204px"></div><div class="hl" style="left:500px;top:1002px;width:1917px;height:1px;background:#dddddd"></div><div class="t" style="left:514px;top:962.3px;font-size:23px;line-height:23px;color:#676a6c;font-weight:400;letter-spacing:0.3px;-webkit-text-stroke:0.5px #676a6c;">Type</div>
<div class="t" style="left:592px;top:962.3px;font-size:23px;line-height:23px;color:#676a6c;font-weight:400;letter-spacing:0.23px;-webkit-text-stroke:0.5px #676a6c;">Certificate Name</div>
<div class="hl" style="left:500px;top:1003px;width:1917px;height:86.5px;background:#f6f6f6"></div><svg class="ic" style="left:514px;top:1033px" width="31" height="25" viewBox="0 0 31 25" fill="#646769"><circle cx="9.5" cy="6.5" r="6"/><path d="M0,23.5 C0,18.5 3.5,15 8.5,15 H11 C14,15 16.5,16 18,17.5 V23.5Z"/><rect x="17.5" y="13.5" width="13" height="11.5" rx="2" fill="#f6f6f6"/><path d="M20.3,15.5 V13.8 A3.5,3.5 0 0 1 27.3,13.8 V15.5" stroke="#f6f6f6" stroke-width="4.5" fill="none"/><rect x="19" y="15.2" width="9.8" height="8.3" rx="1.5"/><path d="M21.3,15.5 V13.8 A2.5,2.5 0 0 1 26.3,13.8 V15.5" stroke="#646769" stroke-width="2" fill="none"/></svg>
<div class="t" style="left:592px;top:1035.3px;font-size:23px;line-height:23px;color:#646769;font-weight:400;letter-spacing:0.4px;">gertrude</div>
<div class="hl" style="left:432px;top:1140px;width:1985px;height:1px;background:#e4e7ea"></div><div id="redbox"></div><svg class="ic" style="left:1150px;top:90px;filter:drop-shadow(0px 3px 2.5px rgba(0,0,0,0.5))" width="320" height="240"><g transform="translate(-1150,-90)"><line x1="1408" y1="133" x2="1275" y2="243" stroke="#fb4146" stroke-width="33" stroke-linecap="round"/><polygon points="1215,294 1259,193.5 1322,268" fill="#fb4146"/></g></svg><svg class="ic" style="left:1725px;top:75px" width="45" height="50"><path d="M9.6,6.3 L9.6,39.3 L16.7,32.4 L22.2,43.6 L26.9,41.3 L22.1,30.6 L33.6,30.6 Z" fill="#fff" stroke="#000" stroke-width="1.15" stroke-linejoin="round"/></svg>
</body></html>
